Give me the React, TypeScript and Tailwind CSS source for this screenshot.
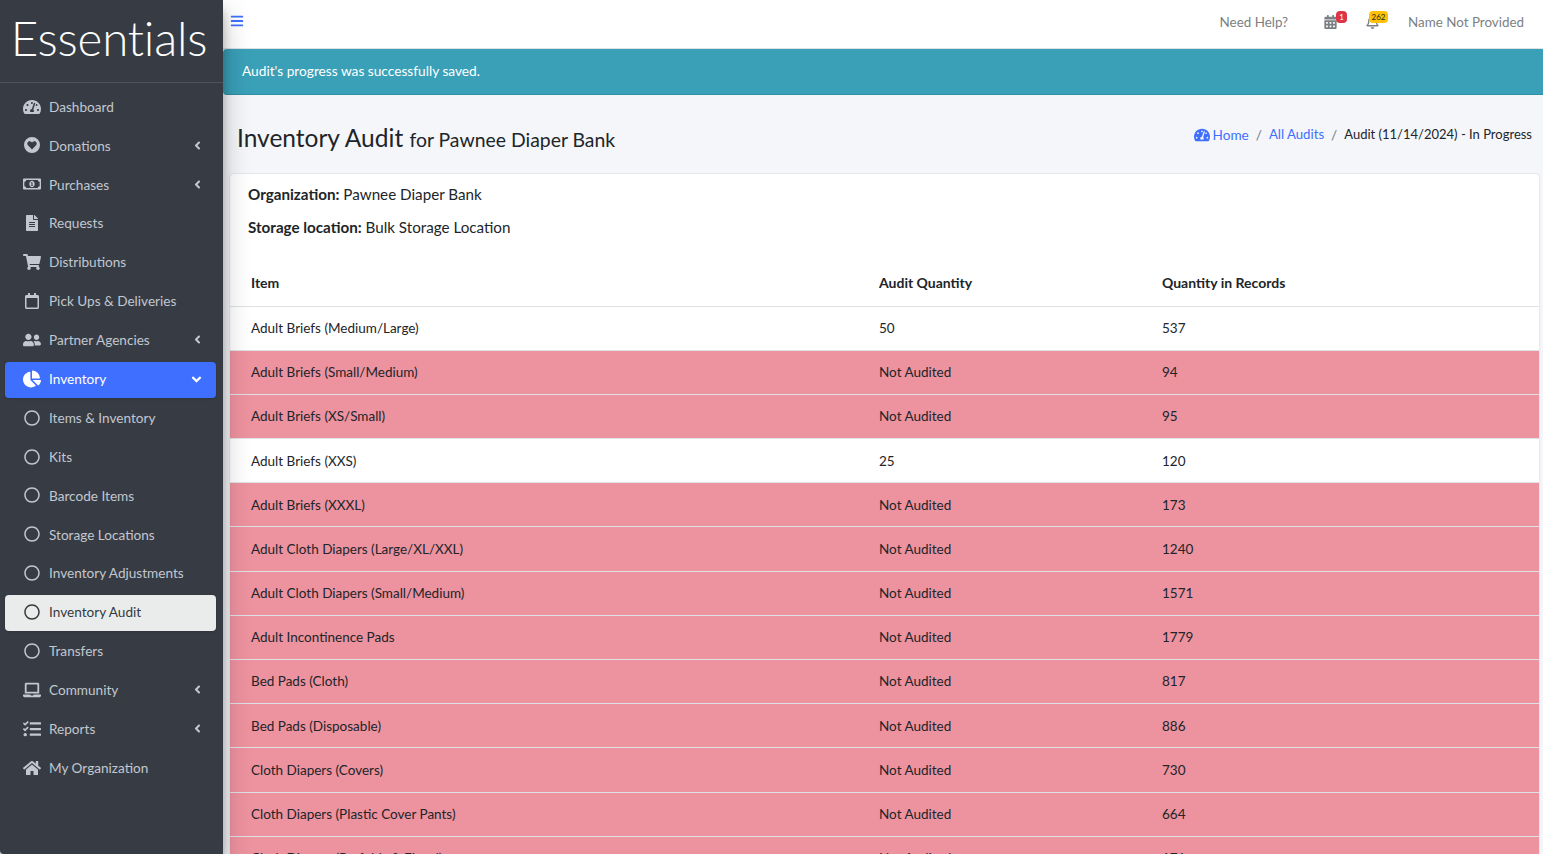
import React from "react";
import { FaAngleDown, FaAngleLeft, FaBars, FaRegBell, FaCalendarAlt, FaChartPie, FaFileAlt, FaHome, FaLaptop, FaRegCalendar, FaRegCircle, FaRegMoneyBillAlt, FaShoppingCart, FaTachometerAlt, FaTasks, FaUserFriends } from "react-icons/fa";

function HeartCircle({ className }: { className?: string }) {
  return (
    <svg viewBox="0 0 16 16" className={className} fill="currentColor">
      <path fillRule="evenodd" d="M8 0a8 8 0 1 1 0 16A8 8 0 0 1 8 0Zm0 12.6 4-4.3c1-1.1.9-2.8-.2-3.6-1-.8-2.4-.6-3.2.3L8 5.6l-.6-.6c-.8-.9-2.2-1.1-3.2-.3-1.1.8-1.2 2.5-.2 3.6l4 4.3Z" />
    </svg>
  );
}

type Nav = { label: string; icon: React.ComponentType<{ className?: string }>; arrow?: "left" | "down"; state?: "primary" | "light"; size?: string };

const nav: Nav[] = [
  { label: "Dashboard", icon: FaTachometerAlt, size: "w-[18px] h-[18px]" },
  { label: "Donations", icon: HeartCircle, arrow: "left" },
  { label: "Purchases", icon: FaRegMoneyBillAlt, arrow: "left", size: "w-[20px] h-[20px]" },
  { label: "Requests", icon: FaFileAlt },
  { label: "Distributions", icon: FaShoppingCart, size: "w-[18px] h-[18px]" },
  { label: "Pick Ups & Deliveries", icon: FaRegCalendar },
  { label: "Partner Agencies", icon: FaUserFriends, arrow: "left", size: "w-[20px] h-[20px]" },
  { label: "Inventory", icon: FaChartPie, arrow: "down", state: "primary", size: "w-[18px] h-[18px]" },
  { label: "Items & Inventory", icon: FaRegCircle },
  { label: "Kits", icon: FaRegCircle },
  { label: "Barcode Items", icon: FaRegCircle },
  { label: "Storage Locations", icon: FaRegCircle },
  { label: "Inventory Adjustments", icon: FaRegCircle },
  { label: "Inventory Audit", icon: FaRegCircle, state: "light" },
  { label: "Transfers", icon: FaRegCircle },
  { label: "Community", icon: FaLaptop, arrow: "left", size: "w-[20px] h-[20px]" },
  { label: "Reports", icon: FaTasks, arrow: "left", size: "w-[18px] h-[18px]" },
  { label: "My Organization", icon: FaHome, size: "w-[18px] h-[18px]" },
];

const rows: [string, string, string][] = [
  ["Adult Briefs (Medium/Large)", "50", "537"],
  ["Adult Briefs (Small/Medium)", "Not Audited", "94"],
  ["Adult Briefs (XS/Small)", "Not Audited", "95"],
  ["Adult Briefs (XXS)", "25", "120"],
  ["Adult Briefs (XXXL)", "Not Audited", "173"],
  ["Adult Cloth Diapers (Large/XL/XXL)", "Not Audited", "1240"],
  ["Adult Cloth Diapers (Small/Medium)", "Not Audited", "1571"],
  ["Adult Incontinence Pads", "Not Audited", "1779"],
  ["Bed Pads (Cloth)", "Not Audited", "817"],
  ["Bed Pads (Disposable)", "Not Audited", "886"],
  ["Cloth Diapers (Covers)", "Not Audited", "730"],
  ["Cloth Diapers (Plastic Cover Pants)", "Not Audited", "664"],
  ["Cloth Diapers (Prefolds & Fitted)", "Not Audited", "171"],
];

function NavItem({ item }: { item: Nav }) {
  const Icon = item.icon;
  const tone =
    item.state === "primary"
      ? "bg-[#3f6fff] text-white shadow"
      : item.state === "light"
        ? "bg-[#eaecec] text-[#343a40] shadow"
        : "text-[#c2c7d0]";
  return (
    <div className={`ml-[5px] mr-[7px] h-[36px] mb-[2.9px] rounded-[4px] flex items-center pl-[18px] pr-[12px] ${tone}`}>
      <span className="w-[18px] flex justify-center shrink-0 mb-[2px]">
        <Icon className={item.size ?? "w-[16px] h-[16px]"} />
      </span>
      <span className="ml-[8px] flex-1 text-[13.6px] whitespace-nowrap pb-[1px]">{item.label}</span>
      {item.arrow === "left" && <FaAngleLeft className="w-[13px] h-[13px] mb-[2px]" />}
      {item.arrow === "down" && <FaAngleDown className="w-[15px] h-[15px] mb-[1px]" />}
    </div>
  );
}

export default function App() {
  return (
    <div className="flex h-screen overflow-hidden bg-[#f4f6f9] text-[#212529] font-['Source_Sans_Pro','Lato','Noto_Sans',sans-serif]">
      <aside className="w-[223px] shrink-0 bg-[#373c44] z-10 rounded-bl-[4px] shadow-[0_14px_28px_rgba(0,0,0,0.25),0_10px_10px_rgba(0,0,0,0.22)] flex flex-col">
        <div className="h-[83px] shrink-0 border-b border-[#4b545c] flex items-center justify-center overflow-hidden pb-[6px] pr-[5px]">
          <span className="text-white text-[47.5px] font-light leading-none whitespace-nowrap font-['Lato',sans-serif] tracking-[-0.2px]">Essentials</span>
        </div>
        <nav className="pt-[6.5px]">
          {nav.map((n) => (
            <NavItem key={n.label} item={n} />
          ))}
        </nav>
      </aside>
      <div className="flex-1 min-w-0 flex flex-col">
        <header className="h-[49px] shrink-0 bg-white border-b border-[#dee2e6] flex items-start text-[13.4px] text-[#7b7f84]">
          <FaBars className="w-[14px] h-[14px] mt-[14px] ml-[7px] text-[#3f6fff]" />
          <div className="ml-auto flex items-center h-[45px] pr-[19px]">
            <span>Need Help?</span>
            <span className="relative ml-[36px] mb-[2px]">
              <FaCalendarAlt className="w-[13px] h-[14px] mt-[1px]" />
              <span className="absolute -top-[3px] left-[12px] w-[11px] h-[12px] rounded-[4px] bg-[#dc3545] text-white text-[8px] leading-[12px] text-center">1</span>
            </span>
            <span className="relative ml-[29px] mb-[2px]">
              <FaRegBell className="w-[13px] h-[14px] mt-[1px]" />
              <span className="absolute -top-[3px] left-[3px] w-[19px] h-[12px] rounded-[4px] bg-[#ffc107] text-[#212529] text-[8px] leading-[12px] text-center">262</span>
            </span>
            <span className="ml-[29px]">Name Not Provided</span>
          </div>
        </header>
        <div className="h-[46px] shrink-0 bg-[#3aa0b8] border-b border-[#2f8fa5] rounded-l-[4px] flex items-center pl-[19px] text-white text-[13.7px]">
          Audit's progress was successfully saved.
        </div>
        <div className="flex items-start justify-between pl-[14px] pr-[11px] pt-[26px] h-[79px] shrink-0">
          <h1 className="text-[24.5px] leading-[33px] whitespace-nowrap">
            Inventory Audit <small className="text-[19.4px]">for Pawnee Diaper Bank</small>
          </h1>
          <div className="flex items-center text-[13.6px] mt-[4px] whitespace-nowrap">
            <FaTachometerAlt className="w-[16px] h-[16px] text-[#3f6fff] mr-[3px]" />
            <span className="text-[#3f6fff]">Home</span>
            <span className="mx-[7px] text-[#6c757d]">/</span>
            <span className="text-[#3f6fff] text-[13.2px]">All Audits</span>
            <span className="mx-[7px] text-[#6c757d]">/</span>
            <span className="text-[13px]">Audit (11/14/2024) - In Progress</span>
          </div>
        </div>
        <main className="ml-[7px] mr-[4px] bg-white rounded-t-[4px] shadow-[0_0_2px_rgba(0,0,0,0.2)] flex-1 min-h-0 overflow-hidden">
          <div className="pl-[18px] pt-[10px] text-[15.2px]">
            <p className="leading-[21px]"><strong>Organization:</strong> Pawnee Diaper Bank</p>
            <p className="leading-[21px] mt-[12px]"><strong>Storage location:</strong> Bulk Storage Location</p>
          </div>
          <table className="w-full table-fixed border-collapse text-[13.5px] mt-[22px]">
            <colgroup>
              <col className="w-[628px]" />
              <col className="w-[283px]" />
              <col />
            </colgroup>
            <thead>
              <tr className="h-[46px] border-b border-[#dee2e6]">
                <th className="pl-[21px] text-left font-bold text-[14px]">Item</th>
                <th className="pl-[21px] text-left font-bold text-[14px]">Audit Quantity</th>
                <th className="pl-[21px] text-left font-bold text-[14px]">Quantity in Records</th>
              </tr>
            </thead>
            <tbody>
              {rows.map((r) => (
                <tr key={r[0]} className={`h-[44.2px] border-b border-[#dee2e6] ${r[1] === "Not Audited" ? "bg-[#ed929f]" : "bg-white"}`}>
                  <td className="pl-[21px]">{r[0]}</td>
                  <td className="pl-[21px]">{r[1]}</td>
                  <td className="pl-[21px]">{r[2]}</td>
                </tr>
              ))}
            </tbody>
          </table>
        </main>
      </div>
    </div>
  );
}
